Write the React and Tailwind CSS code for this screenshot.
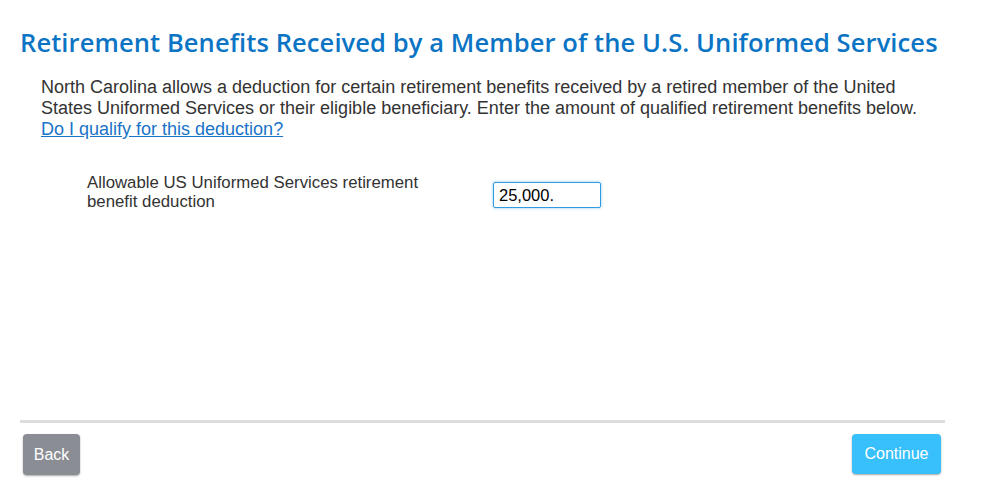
export default function App() {
  return (
    <div className="w-[988px] h-[495px] bg-white flex flex-col">
      <div className="pl-[20px] pt-[26px]">
        <h1 className="text-[25.5px] leading-[32px] font-semibold text-[#0b74c4] [font-family:'Open_Sans',sans-serif] tracking-[0.1px]">
          Retirement Benefits Received by a Member of the U.S. Uniformed Services
        </h1>
      </div>
      <div className="pl-[41px] pr-[60px] pt-[19px] [font-family:'Liberation_Sans',Arial,sans-serif] text-[18px] leading-[21px] text-[#333]">
        <p>
          North Carolina allows a deduction for certain retirement benefits received by a retired member of the United States Uniformed Services or their eligible beneficiary. Enter the amount of qualified retirement benefits below.
        </p>
        <a href="#" className="text-[#1a73c8] underline">Do I qualify for this deduction?</a>
      </div>
      <div className="flex items-start pl-[87px] pt-[31px] [font-family:'Liberation_Sans',Arial,sans-serif]">
        <div className="w-[406px] text-[16.8px] leading-[19px] text-[#333] pt-[2px]">
          Allowable US Uniformed Services retirement<br />benefit deduction
        </div>
        <div className="mt-[11px] w-[108px] h-[26px] border border-[#2f9be0] rounded-[2px] shadow-[0_0_3px_rgba(60,160,230,0.6)] flex items-center px-[5px] text-[16.5px] text-black">
          25,000.
        </div>
      </div>
      <div className="flex-1" />
      <div className="mx-[20px] w-[925px] h-[3px] bg-[#dddddd]" />
      <div className="flex justify-between pl-[23px] pr-[47px] pt-[11px] pb-[20px] [font-family:'Liberation_Sans',Arial,sans-serif]">
        <button className="w-[57px] h-[41px] rounded-[4px] bg-[#8b8d95] text-white text-[16px] shadow-[0_1px_2px_rgba(0,0,0,0.35)]">Back</button>
        <button className="w-[89px] h-[40px] rounded-[4px] bg-[#37c0fb] text-white text-[16px] shadow-[0_1px_2px_rgba(0,0,0,0.35)]">Continue</button>
      </div>
    </div>
  );
}
